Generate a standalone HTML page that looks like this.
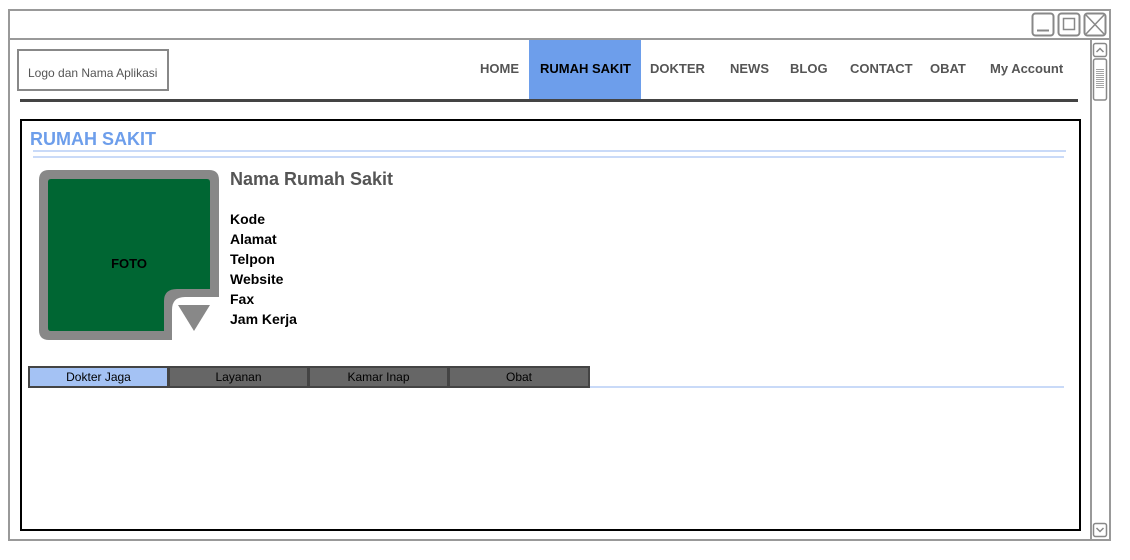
<!DOCTYPE html>
<html><head><meta charset="utf-8"><style>
*{margin:0;padding:0;box-sizing:border-box}
body{width:1130px;height:560px;background:#fff;position:relative;overflow:hidden;font-family:"Liberation Sans",sans-serif}
.a{position:absolute}
.nav{position:absolute;top:61px;font-size:13px;font-weight:bold;color:#555}
.lbl{position:absolute;left:230px;font-size:14px;font-weight:bold;color:#000}
.tab{position:absolute;top:366px;height:22px;width:141px;border:2px solid #444;background:#666;font-size:12px;text-align:center;line-height:19px;color:#000}
</style></head><body>
<div class="a" style="left:8px;top:9px;width:1103px;height:532px;border:2px solid #999"></div>
<div class="a" style="left:8px;top:38px;width:1103px;height:2px;background:#999"></div>
<svg class="a" style="left:1030px;top:12px" width="80" height="26">
<rect x="2.5" y="1.5" width="21" height="22" rx="3" fill="#fff" stroke="#888" stroke-width="2"/>
<line x1="7" y1="18.5" x2="19" y2="18.5" stroke="#888" stroke-width="2"/>
<rect x="28.5" y="1.5" width="21" height="22" rx="3" fill="#fff" stroke="#888" stroke-width="2"/>
<rect x="33.5" y="6.5" width="11" height="11" fill="none" stroke="#888" stroke-width="1.5"/>
<rect x="54.5" y="1.5" width="21" height="22" rx="3" fill="#fff" stroke="#888" stroke-width="2"/>
<path d="M56 3L74 22M74 3L56 22" stroke="#888" stroke-width="1.5"/>
</svg>
<div class="a" style="left:1090px;top:40px;width:19px;height:500px;border-left:2px solid #999"></div>
<svg class="a" style="left:1091px;top:41px" width="18" height="500">
<rect x="2.5" y="2.5" width="13" height="13" rx="2" fill="#fff" stroke="#888" stroke-width="1.5"/>
<path d="M5.5 11L9 7.5L12.5 11" fill="none" stroke="#888" stroke-width="1.5"/>
<rect x="2.5" y="18" width="13" height="41" rx="2" fill="#fff" stroke="#888" stroke-width="1.5"/>
<path d="M5 28.5h8M5 30.5h8M5 32.5h8M5 34.5h8M5 36.5h8M5 38.5h8M5 40.5h8M5 42.5h8M5 44.5h8M5 46.5h8" stroke="#888" stroke-width="0.8"/>
<rect x="2.5" y="482.5" width="13" height="13" rx="2" fill="#fff" stroke="#888" stroke-width="1.5"/>
<path d="M5.5 487L9 490.5L12.5 487" fill="none" stroke="#888" stroke-width="1.5"/>
</svg>
<div class="a" style="left:17px;top:49px;width:152px;height:42px;border:2px solid #888;font-size:12px;color:#555;padding:15px 0 0 9px">Logo dan Nama Aplikasi</div>
<div class="a" style="left:529px;top:40px;width:112px;height:61px;background:#6d9eeb"></div>
<div class="nav" style="left:480px">HOME</div>
<div class="nav" style="left:540px;color:#000">RUMAH SAKIT</div>
<div class="nav" style="left:650px">DOKTER</div>
<div class="nav" style="left:730px">NEWS</div>
<div class="nav" style="left:790px">BLOG</div>
<div class="nav" style="left:850px">CONTACT</div>
<div class="nav" style="left:930px">OBAT</div>
<div class="nav" style="left:990px">My Account</div>
<div class="a" style="left:20px;top:99px;width:1058px;height:3px;background:#444"></div>
<div class="a" style="left:20px;top:119px;width:1061px;height:412px;border:2px solid #000"></div>
<div class="a" style="left:30px;top:129px;font-size:18px;font-weight:bold;color:#6d9eeb">RUMAH SAKIT</div>
<div class="a" style="left:33px;top:150px;width:1033px;height:2px;background:#c9daf8"></div>
<div class="a" style="left:33px;top:156px;width:1031px;height:2px;background:#c9daf8"></div>
<svg class="a" style="left:39px;top:170px" width="180" height="170">
<path d="M0 10Q0 0 10 0H170Q180 0 180 10V127H146Q133 127 133 140V170H10Q0 170 0 160Z" fill="#888"/>
<path d="M12 9Q9 9 9 12V158Q9 161 12 161H125V131Q125 119 138 119H171V12Q171 9 168 9Z" fill="#006633"/>
<path d="M139 135H171L155 161Z" fill="#888"/>
<text x="90" y="98" text-anchor="middle" font-family="Liberation Sans" font-weight="bold" font-size="13">FOTO</text>
</svg>
<div class="a" style="left:230px;top:169px;font-size:18px;font-weight:bold;color:#555">Nama Rumah Sakit</div>
<div class="lbl" style="top:211px">Kode</div>
<div class="lbl" style="top:231px">Alamat</div>
<div class="lbl" style="top:251px">Telpon</div>
<div class="lbl" style="top:271px">Website</div>
<div class="lbl" style="top:291px">Fax</div>
<div class="lbl" style="top:311px">Jam Kerja</div>
<div class="a" style="left:590px;top:386px;width:474px;height:2px;background:#c9daf8"></div>
<div class="tab" style="left:28px;background:#a4c2f4">Dokter Jaga</div>
<div class="tab" style="left:168px">Layanan</div>
<div class="tab" style="left:308px">Kamar Inap</div>
<div class="tab" style="left:448px;width:142px">Obat</div>
</body></html>
